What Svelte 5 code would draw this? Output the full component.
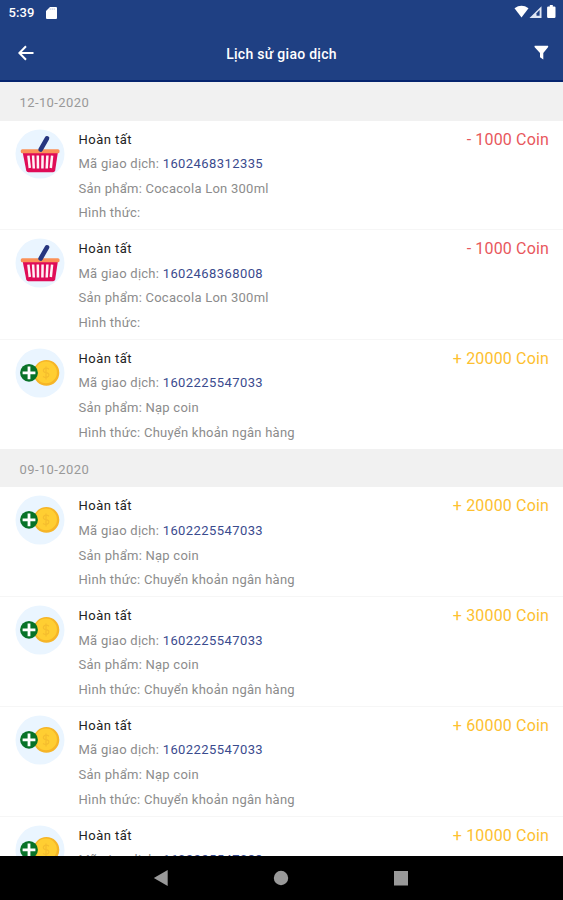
<script>
  const purchase = (code) => ({
    kind: 'basket', code, product: 'Cocacola Lon 300ml', method: '', amount: '- 1000 Coin'
  });
  const topUp = (amount) => ({
    kind: 'coin', code: '1602225547033', product: 'Nạp coin',
    method: 'Chuyển khoản ngân hàng', amount: `+ ${amount} Coin`
  });
  const groups = [
    { date: '12-10-2020', items: [purchase('1602468312335'), purchase('1602468368008'), topUp(20000)] },
    { date: '09-10-2020', items: [topUp(20000), topUp(30000), topUp(60000), topUp(10000)] }
  ];
</script>

<div class="screen">
  <header>
    <div class="status">
      <span class="time">5:39</span>
      <svg class="sd" width="11" height="12" viewBox="0 0 11 12"><path d="M4 0H10Q11 0 11 1V11Q11 12 10 12H1Q0 12 0 11V4Z" fill="#fff"/><path d="M4.2 1.4v1.4M6.2 1.4v1.4M8.2 1.4v1.4" stroke="#9fadd0" stroke-width=".8"/></svg>
      <svg class="signals" width="44" height="14" viewBox="0 0 44 14">
        <path d="M0.5 3.2Q7.5-1.6 14.5 3.2L7.5 12.5Z" fill="#fff"/>
        <path d="M15.5 13L27.5 1.2V13Z" fill="#dfe6f5"/>
        <path d="M22.5 10.8V8.2L25.6 5V10.8Z" fill="#1f4083"/>
        <path d="M35.8 1.4V0h3v1.4h1.5q1.2 0 1.2 1.2v9.2q0 1.2-1.2 1.2h-6q-1.2 0-1.2-1.2V2.6q0-1.2 1.2-1.2Z" fill="#fff"/>
      </svg>
    </div>
    <div class="bar">
      <svg width="16" height="16" viewBox="0 0 16 16"><path d="M15.5 8H1.7M8 1.3L1.4 8L8 14.7" fill="none" stroke="#fff" stroke-width="2"/></svg>
      <h1>Lịch sử giao dịch</h1>
      <svg width="16" height="16" viewBox="0 0 16 16"><path d="M1.7.7H15Q15.5 1.5 15 2.2L10.3 8V14.6L7 12.3V8L1.7 2.2Q1.2 1.3 1.7.7Z" fill="#fff"/></svg>
    </div>
  </header>

  <main>
    {#each groups as group}
      <section>
        <h2>{group.date}</h2>
        {#each group.items as item}
          <article>
            {#if item.kind === 'basket'}
              <svg class="icon" width="50" height="50" viewBox="0 0 50 50">
                <circle cx="25" cy="25" r="24.5" fill="#eaf5ff"/>
                <path d="M7.5 22.5H43L40.2 41.2Q39.8 43.2 38 43.2H13.4Q11.6 43.2 11.2 41.2Z" fill="#df0c57"/>
                <path d="M13.4 26.7L14.8 39M18.1 26.5L18.8 39.5M22.8 26.5L23 39.5M27.6 26.5L27.4 39.5M32.4 26.5L31.7 39.5M37.1 26.7L35.8 39" stroke="#fff2f7" stroke-width="2.5"/>
                <rect x="5.8" y="20.3" width="38.7" height="4" rx="1.5" fill="#fb9158"/>
                <path d="M25.6 20.6L32 9.3" stroke="#27367f" stroke-width="4.6" stroke-linecap="round"/>
              </svg>
            {:else}
              <svg class="icon" width="50" height="50" viewBox="0 0 50 50">
                <circle cx="25" cy="25" r="24.5" fill="#eaf5ff"/>
                <circle cx="31.4" cy="24.8" r="12.9" fill="#f6b527"/>
                <circle cx="31" cy="24.4" r="10.9" fill="#ffce32"/>
                <path d="M34 21.2Q31.5 19 28.7 21.2Q27.4 24 31 24.7Q35 25.4 33.5 28.2Q31 30.5 28 28.4M31 18.5V31.5" fill="none" stroke="#f5bd2e" stroke-width="1.2"/>
                <circle cx="14" cy="24.8" r="8.9" fill="#087228"/>
                <path d="M14 18.4V31.2M7.6 24.8H20.4" stroke="#fff" stroke-width="2.8"/>
              </svg>
            {/if}
            <div class="details">
              <p class="state">Hoàn tất</p>
              <p>Mã giao dịch: <span class="code">{item.code}</span></p>
              <p>Sản phẩm: {item.product}</p>
              <p>Hình thức: {item.method}</p>
            </div>
            <div class="amount" class:spent={item.kind === 'basket'}>{item.amount}</div>
          </article>
        {/each}
      </section>
    {/each}
  </main>

  <nav>
    <svg width="16" height="18" viewBox="0 0 16 18"><path d="M14.7 1V17L.8 9Z" fill="#999"/></svg>
    <svg width="16" height="18" viewBox="0 0 16 18"><circle cx="8" cy="9" r="7.2" fill="#999"/></svg>
    <svg width="16" height="18" viewBox="0 0 16 18"><rect x="1" y="2" width="14" height="14.5" fill="#999"/></svg>
  </nav>
</div>

<style>
  :global(body) { margin: 0; }
  .screen {
    width: 563px; height: 900px; overflow: hidden;
    display: flex; flex-direction: column;
    background: #fff; font-family: Roboto, sans-serif;
  }
  header {
    flex: none; height: 81.5px; box-sizing: border-box;
    background: #1f4083; border-bottom: 2px solid #06256f; color: #fff;
  }
  .status { display: flex; align-items: center; height: 25px; padding: 0 5px 0 8.5px; }
  .time { font-size: 13px; font-weight: 500; line-height: 25px; letter-spacing: .1px; }
  .sd { margin-left: 11px; }
  .signals { margin-left: auto; margin-top: -2px; }
  .bar { display: flex; align-items: center; justify-content: space-between; height: 56px; padding: 0 13.5px 0 18px; }
  h1 { margin: 2px 0 0 -4.5px; font-size: 14px; font-weight: 500; line-height: 20px; letter-spacing: .28px; }
  main { flex: 1; min-height: 0; overflow: hidden; }
  h2 {
    margin: 0; height: 38.2px; box-sizing: border-box; padding: 1.5px 19.5px 0;
    background: #f1f1f1; color: #999; font-size: 13px; font-weight: 400;
    line-height: 37px; letter-spacing: .4px;
  }
  section:first-child h2 { height: 39px; padding-top: 2px; }
  article {
    display: flex; align-items: flex-start; height: 109.7px; box-sizing: border-box;
    padding: 7px 14px 0 14.5px; border-bottom: 1.5px solid #f6f6f6;
  }
  article:last-child { height: 109.4px; border-bottom: 0; }
  .icon { flex: none; margin-top: 1px; }
  .details { margin-left: 14px; flex: 1; }
  p {
    margin: 0; color: #8c8c8c; font-size: 13px; line-height: 24.6px;
    letter-spacing: .25px; white-space: nowrap;
  }
  .state { color: #222; letter-spacing: .48px; }
  .code { color: #3a4b8e; letter-spacing: .42px; }
  .amount { color: #fdc02f; font-size: 16px; line-height: 24.6px; letter-spacing: .16px; white-space: nowrap; }
  .amount.spent { color: #e8575c; }
  nav {
    flex: none; height: 44px; display: flex; align-items: center; justify-content: center;
    gap: 104px; padding-right: 1px; background: #000;
  }
</style>
